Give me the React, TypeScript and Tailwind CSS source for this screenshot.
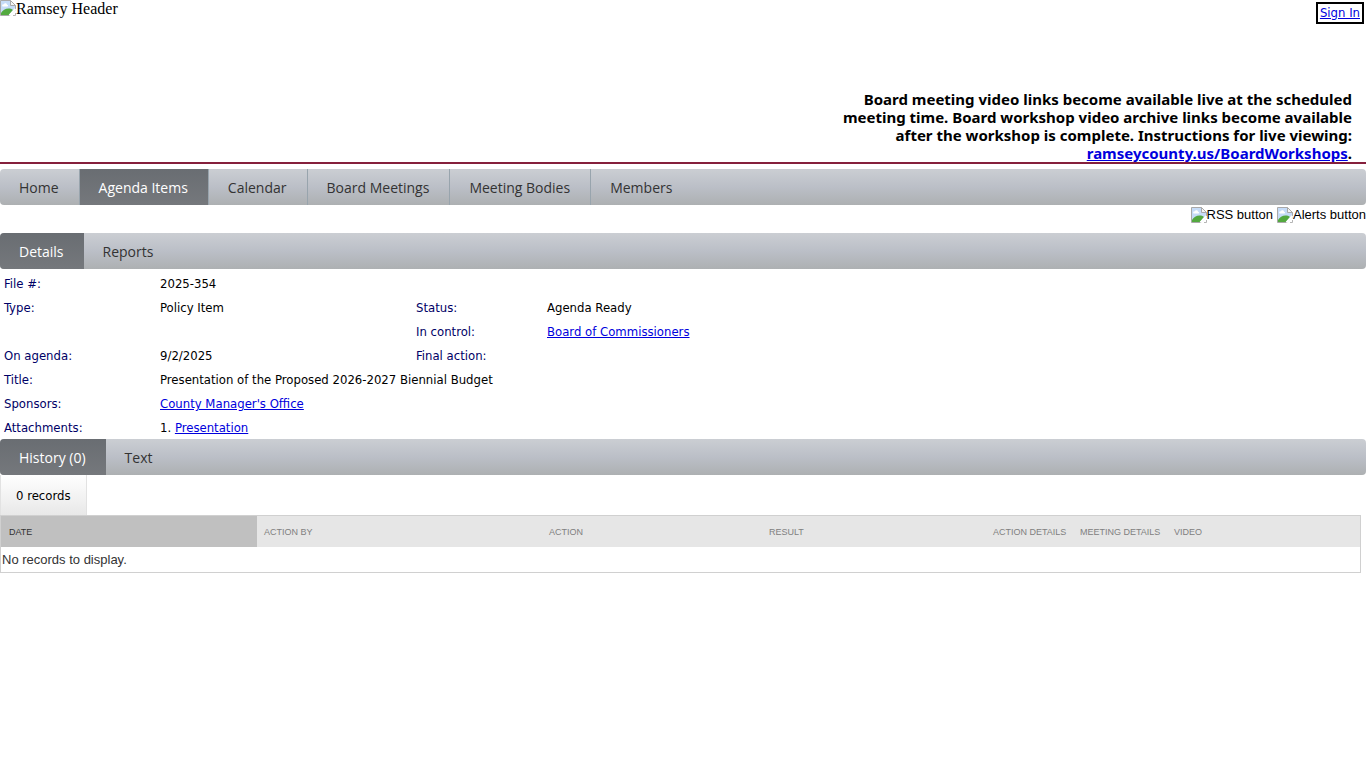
import React from "react";

const link = "text-[#0000dd] underline";

function MissingImage({ label, className }: { label: string; className: string }) {
  return (
    <span className={`inline-flex items-start whitespace-nowrap ${className}`}>
      <svg width="16" height="16" viewBox="0 0 16 16" className="shrink-0" aria-hidden="true">
        <path d="M.5 .5h10l5 5v10H.5z" fill="#c6dcf8" stroke="#a9a9a9" />
        <path d="M2.500 6.500c-1-1.600 .5-2.500 1.300-2 .6-1.700 3-1.400 3.200 .2 1.400 0 1.500 1.800 .2 1.800z" fill="#fff" />
        <path d="M1 15v-2c2-4 8-6 12-3L9 15z" fill="#53a93f" />
        <path d="M10 16l6-6v6z" fill="#fff" />
        <path d="M9.500 15.500l6-6.500" stroke="#fff" strokeWidth="2" />
        <path d="M10.500 .5v5h5z" fill="#f4f4f4" stroke="#a9a9a9" />
        <path d="M13 15.500h2.500V13" fill="none" stroke="#b5b5b5" />
      </svg>
      <span>{label}</span>
    </span>
  );
}

function TabBar({ tabs, active, label, divided = false }: { tabs: string[]; active: string; label: string; divided?: boolean }) {
  return (
    <nav
      aria-label={label}
      className="flex h-9 overflow-hidden rounded-[4px] bg-linear-to-b from-[#cbced3] via-[#bbbfc7] to-[#adb0b2] font-['Open_Sans',sans-serif] text-[14px] leading-[38px]"
    >
      {tabs.map((tab, i) => {
        const edge = divided && i < tabs.length - 1 ? "border-r border-[#98a4ad]" : "";
        const tone = tab === active ? "bg-linear-to-b from-[#696d72] to-[#75787c] text-white" : "text-[#333]";
        return (
          <a key={tab} href="#" className={`h-9 pr-5 pl-[19px] whitespace-nowrap ${edge} ${tone}`}>
            {tab}
          </a>
        );
      })}
    </nav>
  );
}

function Term({ children }: { children: React.ReactNode }) {
  return <dt className="text-[#000066]">{children}</dt>;
}

const columns = [
  { name: "Action By", width: "w-[285px]" },
  { name: "Action", width: "w-[220px]" },
  { name: "Result", width: "w-[224px]" },
  { name: "Action Details", width: "w-[87px]" },
  { name: "Meeting Details", width: "w-[94px]" },
  { name: "Video", width: "" },
];

export default function App() {
  return (
    <div className="bg-white font-['DejaVu_Sans_Condensed','DejaVu_Sans',sans-serif] text-[13px] text-black">
      <header className="flex justify-between border-b-2 border-[#85203c]">
        <MissingImage label="Ramsey Header" className="font-['Liberation_Serif',serif] text-[16px] leading-[18px]" />
        <div className="flex flex-col items-end">
          <a href="#" className={`mt-[2px] mr-[2px] border-2 border-black px-[2px] leading-[18px] ${link}`}>
            Sign In
          </a>
          <p className="mt-[66px] mr-[14px] w-[530px] text-right font-['Noto_Sans',sans-serif] text-[15px] leading-[18px] font-bold">
            Board meeting video links become available live at the scheduled meeting time. Board workshop video archive
            links become available after the workshop is complete. Instructions for live viewing:{" "}
            <a href="#" className={link}>ramseycounty.us/BoardWorkshops</a>.
          </p>
        </div>
      </header>

      <div className="mt-[5px]">
        <TabBar
          label="Main"
          divided
          tabs={["Home", "Agenda Items", "Calendar", "Board Meetings", "Meeting Bodies", "Members"]}
          active="Agenda Items"
        />
      </div>

      <div className="flex h-7 justify-end gap-1 pt-[2px] font-['Liberation_Sans',sans-serif] text-[13px] leading-4">
        <MissingImage label="RSS button" className="" />
        <MissingImage label="Alerts button" className="" />
      </div>

      <main>
        <TabBar label="Item" tabs={["Details", "Reports"]} active="Details" />

        <dl className="grid grid-cols-[156px_256px_131px_1fr] gap-y-px pt-[3px] pl-1 leading-[23px]">
          <Term>File #:</Term>
          <dd className="col-span-3">2025-354</dd>
          <Term>Type:</Term>
          <dd>Policy Item</dd>
          <Term>Status:</Term>
          <dd>Agenda Ready</dd>
          <dt className="col-start-3 text-[#000066]">In control:</dt>
          <dd><a href="#" className={link}>Board of Commissioners</a></dd>
          <Term>On agenda:</Term>
          <dd>9/2/2025</dd>
          <Term>Final action:</Term>
          <dd />
          <Term>Title:</Term>
          <dd className="col-span-3">Presentation of the Proposed 2026-2027 Biennial Budget</dd>
          <Term>Sponsors:</Term>
          <dd className="col-span-3"><a href="#" className={link}>County Manager's Office</a></dd>
          <Term>Attachments:</Term>
          <dd className="col-span-3">1. <a href="#" className={link}>Presentation</a></dd>
        </dl>

        <TabBar label="Records" tabs={["History (0)", "Text"]} active="History (0)" />

        <div className="inline-block h-10 border-r border-l border-[#e2e2e2] bg-linear-to-b from-white to-[#e8e8e8] px-[15px] align-top leading-[42px]">
          0 records
        </div>

        <div className="mr-[5px] border border-[#d0d0d0] font-['Liberation_Sans',sans-serif]">
          <table className="w-full table-fixed border-collapse text-left">
            <thead className="bg-[#e6e6e6] text-[9px] uppercase">
              <tr className="h-[31px]">
                <th scope="col" className="w-[256px] bg-[#c0c0c0] pt-[2px] pl-2 font-normal text-[#333]">Date</th>
                {columns.map((c) => (
                  <th key={c.name} scope="col" className={`pt-[2px] pl-[7px] font-normal whitespace-nowrap text-[#808080] ${c.width}`}>
                    {c.name}
                  </th>
                ))}
              </tr>
            </thead>
            <tbody>
              <tr className="h-[25px]">
                <td colSpan={7} className="pl-px text-[13px] leading-4 text-[#333]">No records to display.</td>
              </tr>
            </tbody>
          </table>
        </div>
      </main>
    </div>
  );
}
